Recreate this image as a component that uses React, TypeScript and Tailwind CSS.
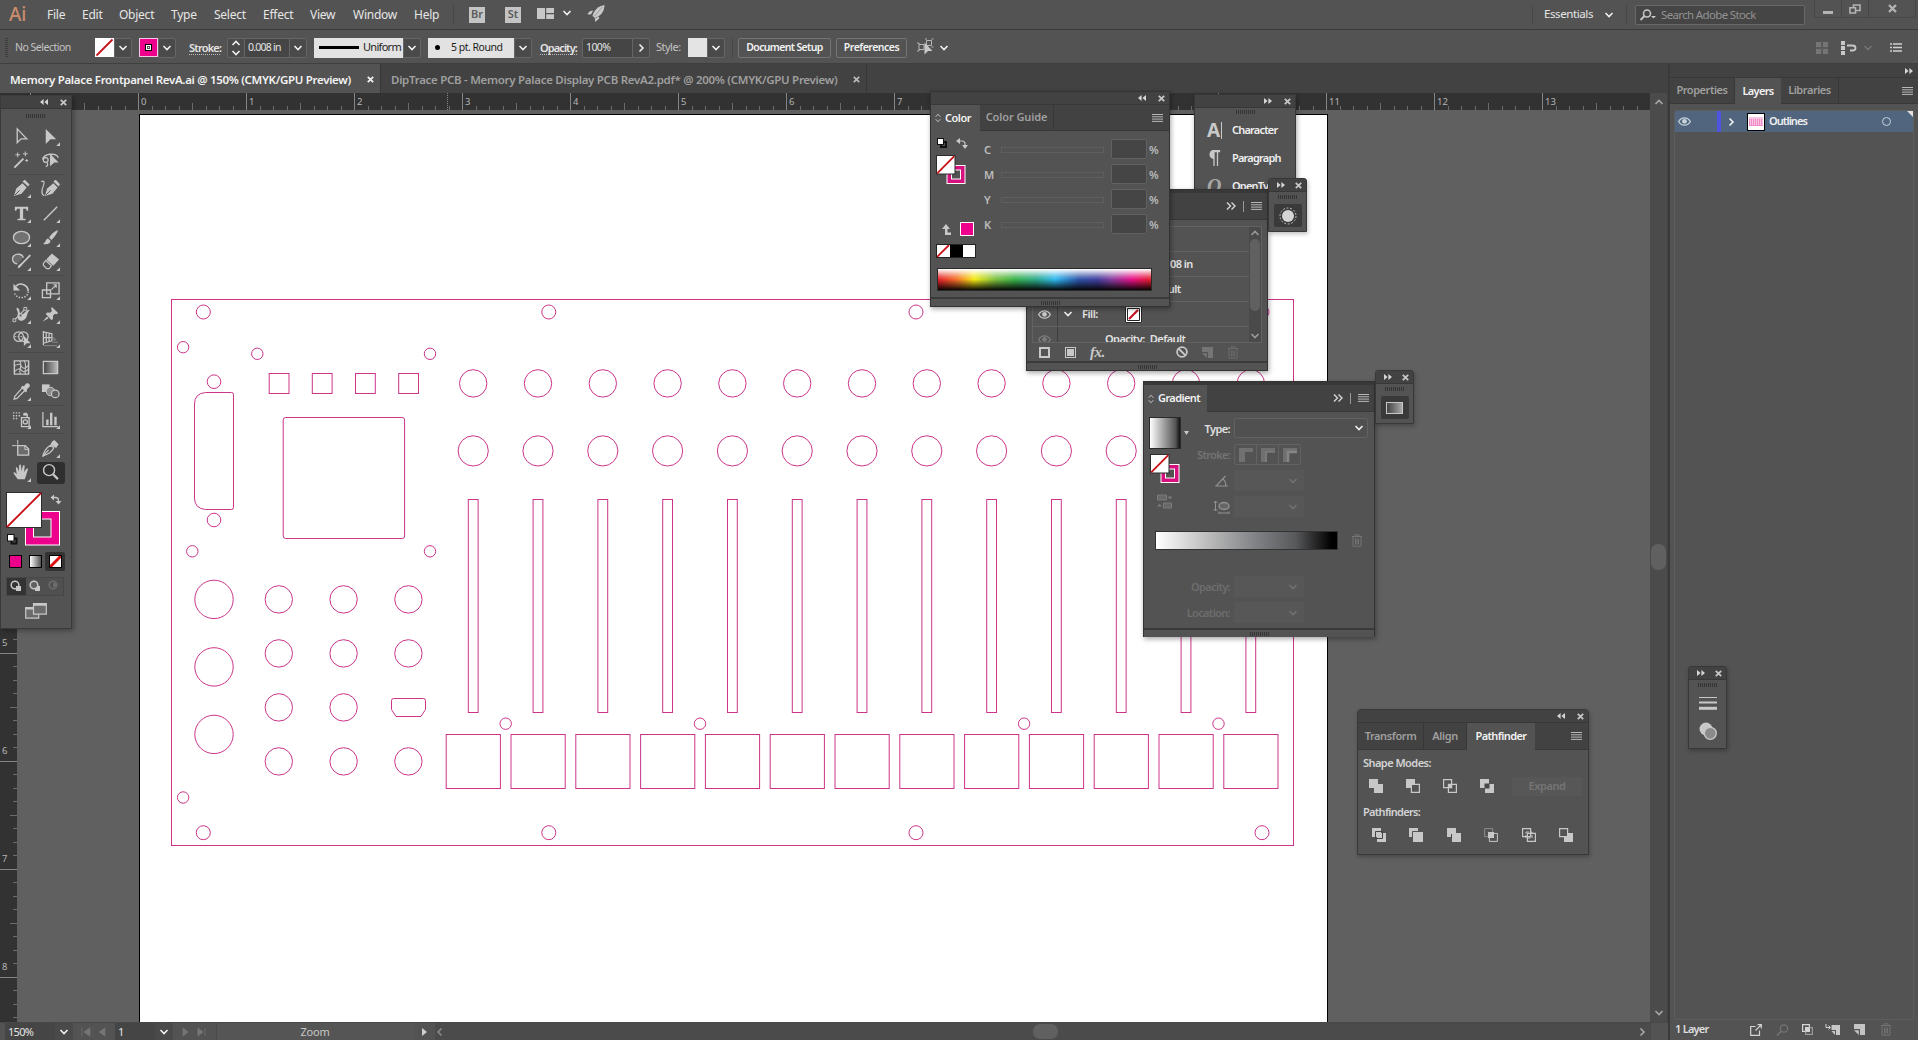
import type { ReactNode } from 'react'
import clsx from 'clsx'

const PINK = '#ec008c'

type IconProps = { className?: string; children: ReactNode; box?: string }

function Svg({ className = 'h-5 w-5', children, box = '0 0 20 20' }: IconProps) {
  return (
    <svg viewBox={box} className={clsx('shrink-0', className)} fill="none" aria-hidden>
      {children}
    </svg>
  )
}

/* ---------- small shared glyphs ---------- */

function Chevron({ dir = 'down', className = 'text-[#f0f0f0]' }: { dir?: 'down' | 'up' | 'right' | 'left'; className?: string }) {
  const d = {
    down: 'M1.5 3l3.5 3.5L8.5 3',
    up: 'M1.5 7L5 3.5 8.5 7',
    right: 'M3.5 1.5L7 5 3.5 8.5',
    left: 'M6.5 1.5L3 5l3.5 3.5',
  }[dir]
  return (
    <Svg box="0 0 10 10" className={clsx('h-2.5 w-2.5', className)}>
      <path d={d} stroke="currentColor" strokeWidth="1.6" />
    </Svg>
  )
}

function DoubleArrow({ dir = 'right' }: { dir?: 'left' | 'right' }) {
  return (
    <Svg box="0 0 8 6" className={clsx('h-1.5 w-2 text-[#d6d6d6]', dir === 'left' && 'rotate-180')}>
      <path d="M0 0l3.6 3L0 6zM4.4 0L8 3 4.4 6z" fill="currentColor" />
    </Svg>
  )
}

function Close({ className = 'h-[7px] w-[7px] text-[#c6c6c6]' }: { className?: string }) {
  return (
    <Svg box="0 0 7 7" className={className}>
      <path d="M.8.8l5.4 5.4M6.2.8L.8 6.2" stroke="currentColor" strokeWidth="1.8" />
    </Svg>
  )
}

function MenuLines() {
  return (
    <Svg box="0 0 11 8" className="h-2 w-[11px]">
      <path d="M0 .5h11M0 2.8h11M0 5.1h11M0 7.4h11" stroke="#b8b8b8" strokeWidth="1" />
    </Svg>
  )
}

function Expander() {
  return (
    <Svg box="0 0 10 8" className="h-2 w-[10px]">
      <path d="M1 .5L4.5 4 1 7.5M5.5.5L9 4 5.5 7.5" stroke="#d6d6d6" strokeWidth="1.4" />
    </Svg>
  )
}

function Grip() {
  return <div className="h-[4px] w-[19px] bg-[repeating-linear-gradient(90deg,#353535_0_1px,transparent_1px_2px)]" />
}

function UpDown() {
  return (
    <Svg box="0 0 6 10" className="h-[10px] w-[6px]">
      <path d="M.7 3.8L3 1.2l2.3 2.6M.7 6.2L3 8.8l2.3-2.6" stroke="#c0c0c0" />
    </Svg>
  )
}

function Trash({ className = 'text-[#747474]' }: { className?: string }) {
  return (
    <Svg box="0 0 12 13" className={clsx('h-[13px] w-3', className)}>
      <path d="M1 2.5h10M4 2V.8h4V2M2 2.5v9.7h8V2.5M4.4 4.5v6M6 4.5v6M7.6 4.5v6" stroke="currentColor" />
    </Svg>
  )
}

function Eye({ className }: { className?: string }) {
  return (
    <Svg box="0 0 13 9" className={clsx('h-[9px] w-[13px]', className)}>
      <path d="M.6 4.5C3.5-.4 9.5-.4 12.4 4.5 9.5 9.4 3.5 9.4.6 4.5z" stroke="currentColor" strokeWidth="1.3" />
      <circle cx="6.5" cy="4.3" r="2.4" fill="currentColor" />
    </Svg>
  )
}

/* fill square with the red "none" slash over the magenta stroke ring */
function FillStroke() {
  return (
    <Svg box="0 0 30 30" className="h-[30px] w-[30px]">
      <rect x="11" y="10.5" width="18" height="18" fill="#d6107f" stroke="#fff" />
      <rect x="15.5" y="15" width="9" height="9" fill="#535353" stroke="#fff" />
      <rect x=".5" y=".5" width="18.5" height="18.5" fill="#fff" stroke="#2c2c2c" />
      <path d="M1.2 18.3L18.3 1.2" stroke="#c81018" strokeWidth="1.8" />
    </Svg>
  )
}

function NewItem({ className = 'text-[#c4c4c4]' }: { className?: string }) {
  return (
    <Svg box="0 0 11 11" className={clsx('h-[11px] w-[11px]', className)}>
      <path d="M0 0h11v11H6V5H0z" fill="currentColor" />
      <path d="M0 6.2h4.8V11z" fill="currentColor" />
    </Svg>
  )
}

/* ---------- top bars ---------- */

function MenuBar() {
  return (
    <header className="flex h-[30px] shrink-0 items-center border-b border-[#3a3a3a] bg-[#535353] text-[12px] text-[#e6e6e6]">
      <span className="ml-[9px] w-[38px] text-[19px] leading-none font-medium tracking-[-0.3px] text-[#c98d6c]">Ai</span>
      <nav className="flex tracking-[-0.25px]">
        <span className="w-[35px]">File</span>
        <span className="w-[37px]">Edit</span>
        <span className="w-[52px]">Object</span>
        <span className="w-[43px]">Type</span>
        <span className="w-[49px]">Select</span>
        <span className="w-[47px]">Effect</span>
        <span className="w-[43px]">View</span>
        <span className="w-[61px]">Window</span>
        <span className="w-[39px]">Help</span>
      </nav>
      <span className="h-[20px] w-px bg-[#474747]" />
      <span className="ml-[15px] flex h-[16px] w-[16px] items-center justify-center bg-[#c4c4c4] text-[11px] font-semibold text-[#5a5a5a]">Br</span>
      <span className="ml-[20px] flex h-[16px] w-[16px] items-center justify-center bg-[#c4c4c4] text-[11px] font-semibold text-[#5a5a5a]">St</span>
      <Svg box="0 0 17 11" className="mb-[3px] ml-[16px] h-[11px] w-[17px]">
        <path d="M0 0h8v11H0zM9.2 0H17v5H9.2zM9.2 6.2H17V11H9.2z" fill="#c8c8c8" />
      </Svg>
      <span className="mb-[3px] ml-[8px] flex"><Chevron /></span>
      <Svg box="0 0 18 17" className="mb-[2px] ml-[15px] h-[17px] w-[18px]">
        <path d="M17.5 0c-5 .8-8.800 3.500-11 8l-1 2.800 2.300 2.200 2.800-1.200C15 9.500 17.300 5.500 17.500 0z" fill="#c8c8c8" />
        <path d="M6.300 5.500c-2.800.2-4.800 1.500-6 3.700l3.600.4zM12 11.500l.2 2-4 3.500-.4-3.500z" fill="#c8c8c8" />
        <path d="M15.500 2L7.500 11" stroke="#8a8a8a" strokeWidth=".7" />
      </Svg>

      <div className="ml-auto flex h-full items-center">
        <span className="h-[20px] w-px bg-[#474747]" />
        <span className="mb-[2px] ml-[11px] w-[60px] text-[11.5px] tracking-[-0.4px]">Essentials</span>
        <span className="flex"><Chevron /></span>
        <span className="ml-[12px] h-[20px] w-px bg-[#474747]" />
        <div className="ml-[8px] flex h-[20px] w-[170px] items-center rounded-[2px] border border-[#686868] bg-[#454545] text-[#929292]">
          <Svg box="0 0 18 12" className="ml-[3px] h-3 w-[18px]">
            <circle cx="8" cy="4.500" r="3.500" stroke="#c8c8c8" strokeWidth="1.500" />
            <path d="M5.500 7L1.500 11" stroke="#c8c8c8" strokeWidth="1.800" />
            <path d="M12 7h5l-2.500 2.500z" fill="#c8c8c8" />
          </Svg>
          <span className="ml-[4px] text-[11.5px] tracking-[-0.65px]">Search Adobe Stock</span>
        </div>
        <div className="ml-[9px] flex h-[18px] self-start rounded-b-[3px] border border-t-0 border-[#474747]">
          <span className="flex w-[27px] items-center justify-center border-r border-[#474747]">
            <span className="mt-[7px] h-[3px] w-[10px] bg-[#b4b4b4]" />
          </span>
          <span className="flex w-[27px] items-center justify-center border-r border-[#474747]">
            <Svg box="0 0 12 10" className="h-[10px] w-3">
              <path d="M4.500 1h6.500v5.500H4.500z" stroke="#b4b4b4" strokeWidth="1.600" />
              <path d="M1 3.800h5.500V9H1z" fill="#535353" stroke="#b4b4b4" strokeWidth="1.600" />
            </Svg>
          </span>
          <span className="flex w-[46px] items-center justify-center">
            <Close className="h-[9px] w-[9px] text-[#b4b4b4]" />
          </span>
        </div>
        <span className="w-[2px]" />
      </div>
    </header>
  )
}

function DropBox({ className, children }: { className?: string; children?: ReactNode }) {
  return (
    <span className={clsx('flex h-[20px] w-[18px] items-center justify-center rounded-r-[2px] border border-[#666] bg-[#4a4a4a]', className)}>
      {children ?? <Chevron />}
    </span>
  )
}

function ControlBar() {
  return (
    <div className="flex h-[34px] shrink-0 items-center border-b border-[#3f3f3f] bg-[#535353] pt-[2px] text-[11px] text-[#e4e4e4]">
      <span className="ml-[5px] h-[19px] w-[3px] bg-[repeating-linear-gradient(#3e3e3e_0_1px,transparent_1px_2px)]" />
      <span className="ml-[7px] w-[73px] text-[10.5px] tracking-[-0.5px] whitespace-nowrap text-[#c4c4c4]">No Selection</span>
      <span className="ml-[7px] flex">
        <Svg box="0 0 19 19" className="h-[19px] w-[19px] bg-white">
          <path d="M1.500 17.500L17.500 1.500" stroke="#c81018" strokeWidth="1.800" />
        </Svg>
        <DropBox />
      </span>
      <span className="ml-[7px] flex">
        <span className="flex h-[19px] w-[19px] items-center justify-center border border-[#f3c8e2] bg-[#ec008c]">
          <span className="flex h-[7px] w-[7px] border border-black bg-white p-[1px]">
            <span className="flex-1 border border-[#555]" />
          </span>
        </span>
        <DropBox />
      </span>
      <span className="ml-[13px] w-[31px] border-b border-dotted border-[#bbb] leading-[13px] font-semibold tracking-[-0.8px]">Stroke:</span>
      <span className="ml-[7px] flex">
        <span className="flex h-[20px] w-[18px] flex-col items-center justify-center rounded-l-[2px] border border-[#666] bg-[#4a4a4a]">
          <Chevron dir="up" />
          <Chevron />
        </span>
        <span className="flex h-[20px] w-[44px] items-center border-y border-[#666] bg-[#454545] pl-[3px] text-[10.5px] tracking-[-0.75px] whitespace-nowrap">0.008 in</span>
        <DropBox />
      </span>
      <span className="ml-[7px] flex">
        <span className="flex h-[20px] w-[89px] items-center bg-[#e2e2e2] pl-[5px] tracking-[-0.7px] text-[#1c1c1c]">
          <span className="mr-[4px] h-[3px] w-[40px] shrink-0 bg-black" />
          Uniform
        </span>
        <DropBox />
      </span>
      <span className="ml-[7px] flex">
        <span className="flex h-[20px] w-[86px] items-center bg-[#e2e2e2] pl-[7px] text-[10.5px] tracking-[-0.5px] whitespace-nowrap text-[#1c1c1c]">
          <span className="mr-[11px] h-[5px] w-[5px] rounded-full bg-black" />
          5 pt. Round
        </span>
        <DropBox />
      </span>
      <span className="ml-[8px] w-[37px] border-b border-dotted border-[#bbb] leading-[13px] font-semibold tracking-[-0.9px]">Opacity:</span>
      <span className="ml-[5px] flex">
        <span className="flex h-[20px] w-[50px] items-center rounded-l-[2px] border border-r-0 border-[#666] bg-[#454545] pl-[3px] text-[10.5px] tracking-[-0.6px]">100%</span>
        <DropBox><Chevron dir="right" /></DropBox>
      </span>
      <span className="ml-[6px] w-[25px] tracking-[-0.5px] text-[#c4c4c4]">Style:</span>
      <span className="ml-[7px] flex">
        <span className="h-[19px] w-[19px] bg-[#e4e4e4]" />
        <DropBox />
      </span>
      <span className="ml-[7px] h-[20px] w-px bg-[#474747]" />
      <span className="ml-[5px] flex h-[20px] w-[93px] items-center justify-center rounded-[2px] border border-[#747474] text-[10.5px] font-semibold tracking-[-0.65px] whitespace-nowrap text-[#f2f2f2]">Document Setup</span>
      <span className="ml-[5px] flex h-[20px] w-[71px] items-center justify-center rounded-[2px] border border-[#747474] text-[10.5px] font-semibold tracking-[-0.5px] text-[#f2f2f2]">Preferences</span>
      <Svg box="0 0 17 17" className="mb-[3px] ml-[10px] h-[17px] w-[17px]">
        <path d="M2 6.500h5v5H2zM0 5h2M0 13h2M9.500 2.500h5v5h-5zM8 1h2M14.500 1h2M14.500 9h2M2 5v1.500M2 11.500V13" stroke="#b6b6b6" />
        <path d="M7.500 4.500l8 8.500h-4.500l-3.500 3.500z" fill="#c8c8c8" />
      </Svg>
      <span className="ml-[5px] flex"><Chevron /></span>

      <div className="ml-auto flex items-center">
        <Svg box="0 0 12 12" className="h-3 w-3">
          <path d="M0 0h5v5H0zM7 0h5v5H7zM0 7h5v5H0zM7 7h5v5H7z" fill="#757575" />
          <path d="M6 0v12M0 6h12" stroke="#6b6b6b" strokeDasharray="1 1" />
        </Svg>
        <Svg box="0 0 16 14" className="ml-[13px] h-[14px] w-4">
          <path d="M0 0h4v4H0zM0 5h4v4H0zM0 10h4v4H0z" fill="#c8c8c8" />
          <path d="M6 4.500h5.500c4 0 4 5 0 5H9" stroke="#c8c8c8" strokeWidth="1.800" />
        </Svg>
        <span className="ml-[6px] flex"><Chevron className="text-[#747474]" /></span>
        <Svg box="0 0 12 9" className="mr-[16px] ml-[17px] h-[9px] w-3">
          <path d="M0 1h2M0 4.500h2M0 8h2M3 1h9M3 4.500h9M3 8h9" stroke="#d0d0d0" strokeWidth="1.300" />
        </Svg>
      </div>
    </div>
  )
}

function DocTabs() {
  return (
    <div className="flex h-[29px] shrink-0 bg-[#424242] text-[11.5px] font-semibold">
      <div className="flex w-[381px] items-center justify-between border-r border-[#383838] bg-[#535353] pt-[2px] pr-[6px] pl-[10px] text-[#f2f2f2]">
        <span className="tracking-[-0.31px] whitespace-nowrap">Memory Palace Frontpanel RevA.ai @ 150% (CMYK/GPU Preview)</span>
        <Close className="h-[7px] w-[7px] text-[#f0f0f0]" />
      </div>
      <div className="flex w-[486px] items-center justify-between border-r border-[#383838] pt-[2px] pr-[6px] pl-[10px] text-[#9f9f9f]">
        <span className="tracking-[-0.285px] whitespace-nowrap">DipTrace PCB - Memory Palace Display PCB RevA2.pdf* @ 200% (CMYK/GPU Preview)</span>
        <Close className="h-[7px] w-[7px] text-[#b8b8b8]" />
      </div>
    </div>
  )
}

/* ---------- rulers & artboard ---------- */

const INCH = 108
const ORIGIN_X = 138.5
const ORIGIN_Y = 113.3

const H_TICKS = Array.from({ length: 122 }, (_, i) => i - 10).filter((i) => ORIGIN_X + i * 13.5 < 1650)
const V_TICKS = Array.from({ length: 68 }, (_, i) => i)

function tickLength(i: number) {
  if (i % 8 === 0) return 17
  return i % 4 === 0 ? 7 : 4
}

function HRuler() {
  return (
    <svg viewBox="0 93 1650 17" className="block h-[17px] w-[1650px] bg-[#323232]">
      {H_TICKS.map((i) => {
        const x = Math.round(ORIGIN_X + i * 13.5 - 0.5) + 0.5
        return <path key={i} d={`M${x} 110v-${tickLength(i)}`} stroke={i % 8 === 0 ? '#858585' : '#6c6c6c'} />
      })}
      {H_TICKS.filter((i) => i >= 0 && i % 8 === 0).map((i) => (
        <text key={i} x={ORIGIN_X + i * 13.5 + 2.5} y="105" fontSize="9.5" fill="#b4b4b4">
          {i / 8}
        </text>
      ))}
      <path d="M447.5 93v17" stroke="#858585" strokeDasharray="1 1" />
    </svg>
  )
}

// The first inches lie under the toolbox, so labels start below it.
function VRuler() {
  return (
    <svg viewBox="0 110 17 912" className="block h-[912px] w-[17px] shrink-0 bg-[#323232]">
      {V_TICKS.map((i) => {
        const y = Math.round(ORIGIN_Y + i * 13.5 - 0.5) + 0.5
        return <path key={i} d={`M17 ${y}h-${tickLength(i)}`} stroke={i % 8 === 0 ? '#858585' : '#6c6c6c'} />
      })}
      {V_TICKS.filter((i) => i >= 40 && i % 8 === 0).map((i) => (
        <text key={i} x="2" y={ORIGIN_Y + (i / 8) * INCH - 7} fontSize="9.5" fill="#b4b4b4">
          {i / 8}
        </text>
      ))}
    </svg>
  )
}

// [cx, cy, r]
const HOLES: [number, number, number][] = [
  [203.3, 312, 7], [548.8, 312, 7], [916, 312, 7], [1262, 312, 7],
  [203.3, 832.7, 7], [548.8, 832.7, 7], [916, 832.7, 7], [1262, 832.7, 7],
  [183.1, 347.2, 5.7], [257.3, 353.8, 5.7], [430, 353.8, 5.7],
  [192.3, 551.3, 5.7], [430, 551.3, 5.7], [183.1, 797.5, 5.7],
  [214, 381.7, 6.8], [214, 520, 6.8],
  [505.7, 723.7, 5.7], [700, 723.7, 5.7], [1024.1, 723.7, 5.7], [1218.5, 723.7, 5.7],
  [214, 599.4, 19.2], [214, 666.9, 19.2], [214, 734.4, 19.2],
]

const COLUMNS = Array.from({ length: 13 }, (_, i) => 473.2 + i * 64.8)
const KNOB_X = [278.8, 343.6, 408.4]
const KNOB_Y = [599.4, 653.4, 707.4, 761.4]
const LED_X = [269.2, 312.3, 355.5, 398.7]

function Artboard() {
  return (
    <svg viewBox="17 110 1633 912" className="block h-[912px] w-[1633px] bg-[#606060]">
      <rect x="139.5" y="114.5" width="1188" height="1400" fill="#fff" stroke="#000" />
      <g fill="none" stroke="#cb3489">
        <rect x="171.5" y="299.5" width="1122" height="546" />
        {HOLES.map(([cx, cy, r], i) => (
          <circle key={i} cx={cx} cy={cy} r={r} />
        ))}
        {KNOB_X.flatMap((cx) =>
          KNOB_Y.filter((cy) => !(cx === 408.4 && cy === 707.4)).map((cy) => (
            <circle key={`${cx}-${cy}`} cx={cx} cy={cy} r="13.7" />
          )),
        )}
        {LED_X.map((x) => (
          <rect key={x} x={x} y="373.5" width="19.8" height="20" />
        ))}
        <rect x="283.2" y="417.5" width="121.4" height="121" rx="2.5" />
        <path d="M205.5 392.5h26q2 0 2 2v113q0 2-2 2h-26q-11-1-11-11.5v-94q0-10.5 11-11.5z" />
        <path d="M393.5 698.5h30q2 0 2 2v9l-4.5 7h-25l-4.5-7v-9q0-2 2-2z" />
        {COLUMNS.map((x) => (
          <g key={x}>
            <circle cx={x} cy="383.4" r="13.7" />
            <circle cx={x} cy="450.9" r="15.1" />
            <rect x={x - 4.9} y="499.5" width="9.8" height="213" />
            <rect x={x - 27} y="734.5" width="54.2" height="54" />
          </g>
        ))}
      </g>
    </svg>
  )
}

function StatusBar() {
  return (
    <div className="flex h-[18px] items-center border-t border-[#484848] bg-[#535353] text-[11px] text-[#e4e4e4]">
      <span className="ml-[5px] flex h-full w-[50px] items-center bg-[#454545] pt-px pl-[3px] tracking-[-0.7px]">150%</span>
      <span className="flex h-full w-[18px] items-center justify-center bg-[#4a4a4a]"><Chevron /></span>
      <Svg box="0 0 42 10" className="h-[10px] w-[42px] text-[#757575]">
        <path d="M9 1v8M17 1v8l-6-4zM32 1v8l-6-4z" fill="currentColor" stroke="currentColor" strokeWidth=".8" />
      </Svg>
      <span className="flex h-full w-[40px] items-center bg-[#454545] pt-px pl-[3px]">1</span>
      <span className="flex h-full w-[18px] items-center justify-center bg-[#4a4a4a]"><Chevron /></span>
      <Svg box="0 0 43 10" className="h-[10px] w-[43px] text-[#757575]">
        <path d="M10 1v8l5-4zM25 1v8l5-4zM32 1v8" fill="currentColor" stroke="currentColor" strokeWidth=".8" />
      </Svg>
      <span className="flex h-full w-[199px] items-center justify-center border-l border-[#4a4a4a] bg-[#555] pt-px pr-[2px] tracking-[-0.2px] text-[#c8c8c8]">Zoom</span>
      <Svg box="0 0 20 10" className="h-[10px] w-[20px]">
        <path d="M7 1v8l5-4z" fill="#d0d0d0" />
      </Svg>
      <span className="flex h-full flex-1 items-center justify-between bg-[#4b4b4b] pr-[4px]">
        <Chevron dir="left" className="text-[#8a8a8a]" />
        <span className="ml-[9px] h-[15px] w-[25px] rounded-[7px] bg-[#606060]" />
        <Chevron dir="right" className="text-[#a8a8a8]" />
      </span>
      <span className="h-full w-[17px]" />
    </div>
  )
}

/* ---------- right dock ---------- */

function LayersDock() {
  return (
    <aside className="flex w-[250px] shrink-0 flex-col border-l-2 border-[#3a3a3a] bg-[#535353] text-[11px]">
      <div className="flex h-[13px] shrink-0 items-center justify-end bg-[#424242] pr-[5px]"><DoubleArrow /></div>
      <div className="flex h-[27px] shrink-0 items-stretch border-y border-[#383838] bg-[#424242] font-semibold text-[#9f9f9f]">
        <span className="flex w-[65px] items-center justify-center border-r border-[#383838] tracking-[-0.45px]">Properties</span>
        <span className="-mb-px flex w-[46px] items-center justify-center bg-[#535353] tracking-[-0.65px] text-[#f2f2f2]">Layers</span>
        <span className="flex w-[58px] items-center justify-center border-r border-[#383838] tracking-[-0.45px]">Libraries</span>
        <span className="mr-[5px] ml-auto flex items-center"><MenuLines /></span>
      </div>
      <div className="mx-[4px] mt-[6px] flex-1 rounded-[3px] border border-[#5e5e5e]">
        <div className="flex h-[21px] items-center bg-[#51667e] font-semibold text-[#f0f0f0]">
          <span className="ml-[3px] flex w-[39px] text-[#c8d2dc]"><Eye className="h-2 w-3" /></span>
          <span className="h-full w-[4px] bg-[#4f55e0]" />
          <span className="mr-[11px] ml-[5px] flex"><Chevron dir="right" /></span>
          <Svg box="0 0 18 18" className="h-[18px] w-[18px]">
            <rect x=".5" y=".5" width="17" height="17" fill="#fff" stroke="#000" />
            <path d="M2 5h14M2 12.5h14" stroke="#f28cc8" />
            <path d="M2 9h14" stroke="#f08cc6" strokeWidth="6" strokeDasharray="1.5 .5" />
          </Svg>
          <span className="ml-[4px] tracking-[-0.9px]">Outlines</span>
          <span className="ml-auto h-[9px] w-[9px] rounded-full border border-[#c8d2dc]" />
          <Svg box="0 0 6 6" className="ml-[16px] h-1.5 w-1.5 self-start"><path d="M0 0h6v6z" fill="#e2e2e2" /></Svg>
        </div>
      </div>
      <div className="flex h-[20px] shrink-0 items-center pb-px pl-[5px] text-[#dedede]">
        <span className="w-[75px] font-semibold tracking-[-0.75px]">1 Layer</span>
        <Svg box="0 0 12 12" className="h-3 w-3">
          <path d="M5.5 2.5H.7v8.800h8.800V6.500M7.500.7h3.800v3.800M11.300.7L5.500 6.500" stroke="#d4d4d4" strokeWidth="1.200" />
        </Svg>
        <Svg box="0 0 13 12" className="ml-[14px] h-3 w-[13px]">
          <circle cx="8" cy="4.500" r="3.700" stroke="#757575" strokeWidth="1.200" />
          <path d="M5.300 7.300L1 11.500" stroke="#757575" strokeWidth="1.600" />
        </Svg>
        <Svg box="0 0 11 11" className="ml-[13px] h-[11px] w-[11px]">
          <path d="M.6.6h6.800v6.800H.6z" stroke="#d4d4d4" strokeWidth="1.200" />
          <path d="M3.600 3.600h6.800v6.800H3.600z" stroke="#9a9a9a" strokeWidth="1.200" />
          <path d="M3 3h4.500v4.500H3z" fill="#d4d4d4" />
        </Svg>
        <Svg box="0 0 15 11" className="ml-[12px] h-[11px] w-[15px]">
          <path d="M1 0v3.500h4M3.500 1.500l2 2-2 2" stroke="#d4d4d4" />
          <path d="M6.500 1H15v10h-4V6H6.500zM6.500 7H10v4z" fill="#c8c8c8" />
        </Svg>
        <span className="ml-[14px] flex"><NewItem /></span>
        <span className="ml-[15px] flex"><Trash /></span>
      </div>
    </aside>
  )
}

/* ---------- floating panels ---------- */

function PanelHeader({ dir, className, gap = 'gap-[12px]' }: { dir: 'left' | 'right'; className?: string; gap?: string }) {
  return (
    <div className={clsx('flex h-[13px] shrink-0 items-center justify-end border-b border-[#383838] bg-[#424242] pr-[4px]', gap, className)}>
      <DoubleArrow dir={dir} />
      <Close />
    </div>
  )
}

function PanelFoot() {
  return (
    <div className="flex h-[9px] shrink-0 items-center justify-center border-t-2 border-[#3a3a3a] bg-[#535353]">
      <Grip />
    </div>
  )
}

const G = '#c8c8c8'

const arrowPath = 'M5 2l11 11h-6l-5 5z'
const nib = 'M2 18l2.5-8L11 4.5l4.5 4.5L10 15.5z'

function Corner() {
  return <path d="M20 16v4h-4z" fill={G} />
}

const TOOL_GROUPS: ReactNode[][] = [
  [
    <path d="M5.5 2l10 10.5h-6l-4 4z" stroke={G} strokeWidth="1.4" />,
    <><path d={arrowPath} fill={G} /><Corner /></>,
    <>
      <path d="M2.5 17.5L12 8" stroke={G} strokeWidth="2" />
      <path d="M6 1.5v5M3.5 4h5M14 .5v5M11.5 3h5M15.5 8.5v3M14 10h3" stroke={G} />
    </>,
    <>
      <path d="M2 9c-1-6 15-8 16-2" stroke={G} strokeWidth="1.6" />
      <circle cx="5" cy="9.5" r="2.5" stroke={G} strokeWidth="1.3" />
      <path d="M6 12c2 1.5 1 4-1 4.5" stroke={G} strokeWidth="1.3" />
      <path d="M9.5 3l9 9h-4.5l-4.5 4z" fill={G} />
    </>,
  ],
  [
    <><path d={nib} fill={G} /><path d="M3 17l5-5" stroke="#535353" /><path d="M11 2.5L13.5.8l5 5L17 8z" fill={G} /><Corner /></>,
    <>
      <path d={nib} fill={G} transform="translate(2)" />
      <path d="M5 17l5-5" stroke="#535353" />
      <path d="M13 2.5L15.5.8l4.5 4.8L18.5 8z" fill={G} />
      <path d="M0 3c3-2 4 0 2.5 4s-3 9 1 10.5" stroke={G} strokeWidth="1.2" />
    </>,
    <><path d="M3 3h14v4h-1.5l-.8-2h-3v10.5h2.5V17H5.8v-1.5h2.5V5h-3l-.8 2H3z" fill={G} /><Corner /></>,
    <><path d="M3 17L17 3" stroke={G} strokeWidth="1.5" /><Corner /></>,
    <><ellipse cx="10" cy="10" rx="8.5" ry="6.5" fill="#727272" stroke={G} strokeWidth="1.4" /><Corner /></>,
    <><path d="M18 2c-4 1.5-7.5 4.5-9.5 8l2.5 2.5c3-3 6-6.5 7-10.5zM7.5 11c-3 0-2 4.5-5.5 5.5 4 1.5 8 0 8-3z" fill={G} /><Corner /></>,
    <>
      <path d="M12 6c-1-4-7-5-10-2s-1 8 3.5 8.5" fill="#6c6c6c" stroke={G} strokeWidth="1.4" />
      <path d="M20 4l-8 8-4 4.5-2 .5.5-2.5 4.5-4L18.5 2.5z" fill={G} />
      <Corner />
    </>,
    <>
      <path d="M11.5 1.5L19 8l-6 6.5L5.5 8z" fill={G} />
      <path d="M5 9l6 5.5-2.5 3H6L2.5 14v-2z" stroke={G} strokeWidth="1.3" />
      <Corner />
    </>,
  ],
  [
    <>
      <path d="M4 5.5c5-5 13-1 13 5" stroke={G} strokeWidth="1.7" />
      <path d="M1.5 3v7h7z" fill={G} />
      <path d="M17 11c0 8-13 9-14.5 1" stroke={G} strokeWidth="1.5" strokeDasharray="1.5 1.5" />
      <Corner />
    </>,
    <>
      <path d="M6 2h13v11.5H6zM1.5 9.5H10v8H1.5z" stroke={G} strokeWidth="1.4" />
      <path d="M11 9l5-5M13 4h3v3" stroke={G} strokeWidth="1.2" />
      <Corner />
    </>,
    <>
      <path d="M5 3c4 0 2 7 5 7s4-5 9-5c-4 3-2 9-7 11s-7-2-6-6-2-4-1-7z" fill={G} />
      <path d="M2.5 16L14 4" stroke={G} strokeWidth="1.2" />
      <path d="M1 14.5h3v3H1zM12.5 2.5h3v3h-3zM7.5 9.5h3v3h-3z" fill="#535353" stroke={G} />
      <Corner />
    </>,
    <><path d="M11.5 2l6.5 6.5-1.5 1.2-2-.4-2 2.2.2 3-1.5 1.5L5 9.5 6.5 8l3 .2 2-2-.8-2.5zM6.5 12L1.5 17.5 8 14z" fill={G} /><Corner /></>,
    <>
      <circle cx="7" cy="8" r="5" stroke={G} strokeWidth="1.3" />
      <circle cx="12" cy="8" r="5" stroke={G} strokeWidth="1.3" />
      <path d="M3 8h9" stroke={G} strokeDasharray="1.5 1.5" />
      <path d="M12.5 7l7 8h-4l-3 3z" fill={G} />
      <Corner />
    </>,
    <>
      <path d="M2.5 2v15M2.5 3l9 2v7.5l-9 2.5M2.5 9h9M5.5 4v10M8.5 4.5v9" stroke={G} strokeWidth="1.3" />
      <path d="M12 9l3 1M3 17.5h14M12 14h6M12 11.5h4" stroke="#8c8c8c" />
      <Corner />
    </>,
  ],
  [
    <>
      <path d="M2.5 3h15v14h-15z" stroke={G} strokeWidth="1.5" />
      <path d="M3 8c5-3 6-1 7 1s4 3 7-1M3 14c4-4 6-3 7-1s4 2 7-1M8 3c4 4-2 10 1 14M13 3c3 5 0 8 1 14" stroke={G} strokeWidth="1.1" />
    </>,
    <>
      <defs>
        <linearGradient id="toolGrad"><stop stopColor="#444" /><stop offset="1" stopColor="#bbb" /></linearGradient>
      </defs>
      <path d="M2.5 3.5h15v13h-15z" fill="url(#toolGrad)" stroke={G} strokeWidth="1.4" />
    </>,
    <>
      <path d="M11 6l-8 9-.8 3 3-.8 8.5-8.5" stroke={G} strokeWidth="1.3" />
      <path d="M9.5 5.5l1.5-1.5 1.5.5L15 1.5c2.500-1 4.500 1 3.500 3.500L15.500 8l.3 1.500L14.500 11z" fill={G} />
      <Corner />
    </>,
    <>
      <path d="M1 2.5h8v8H1z" fill={G} />
      <circle cx="10" cy="10" r="4.5" fill="#8a8a8a" stroke={G} />
      <circle cx="15" cy="12.5" r="4" fill="#606060" stroke={G} strokeWidth="1.3" />
    </>,
  ],
  [
    <>
      <path d="M10 8h8v9.5h-8zM12 5h4v3" stroke={G} strokeWidth="1.4" />
      <circle cx="14" cy="12.5" r="2.2" stroke={G} strokeWidth="1.3" />
      <path d="M1 3h1.5M4 3h1.5M7 3h1.5M1 6h1.5M4 6h1.5M7 6h1.5M1 9h1.5M4 9h1.5" stroke={G} strokeWidth="1.5" />
      <path d="M12 3h4v2.5h-4z" fill={G} />
      <Corner />
    </>,
    <><path d="M2 2v15.5h16" stroke={G} strokeWidth="1.3" /><path d="M5.5 10h2.5v6H5.5zM9.5 3H12v13H9.5zM14 7h2.5v9H14z" fill={G} /><Corner /></>,
  ],
  [
    <>
      <path d="M6 7h8l3.5 3.5V17H6z" fill="#6c6c6c" stroke={G} strokeWidth="1.4" />
      <path d="M0 7h5M6 1v5" stroke={G} />
      <path d="M13.5 7v4h4" stroke={G} />
    </>,
    <>
      <path d="M2 18c1-5 3-8.5 8-11.5l3.5 2.8C11 14.5 7 16 2 18z" stroke={G} strokeWidth="1.3" />
      <path d="M3 17l5-5.5" stroke={G} strokeWidth="1.3" />
      <path d="M11.5 3l2.5-2L18.5 5.5 16 9.5 10 6z" fill={G} />
      <Corner />
    </>,
    <>
      <path d="M6 17c-2-3-4-5-4.5-7 1-1 2 0 3.5 2L4 5c1-1.3 1.8 0 2.2 1l1 3L7.5 2.5c.5-1.2 1.8-1 2 0L10 8.5l1.5-5.5c.8-1 2-.5 1.8.8L12.8 9.5l2.4-3.5c1-.8 2 .2 1.5 1.2C15.5 11 14.5 14 13.5 17z" fill={G} />
      <Corner />
    </>,
    <><circle cx="8.5" cy="7.5" r="5.8" stroke={G} strokeWidth="1.5" /><path d="M12.8 12l5 5" stroke={G} strokeWidth="2.4" /></>,
  ],
]

function Toolbox() {
  return (
    <div className="absolute top-[95px] left-0 flex h-[534px] w-[72px] flex-col border border-[#3a3a3a] bg-[#535353] shadow-[2px_2px_5px_rgba(0,0,0,0.3)]">
      <PanelHeader dir="left" />
      <div className="ml-[25px] flex h-[13px] shrink-0 items-center"><Grip /></div>
      {TOOL_GROUPS.map((group, g) => (
        <div key={g} className={clsx('mx-[6px] grid shrink-0 grid-cols-2 pt-[2px] pb-px', g > 0 && 'border-t border-[#494949]')}>
          {group.map((icon, i) => {
            const active = g === 5 && i === 3
            return (
              <span key={i} className="flex h-[24.35px] items-center justify-center">
                <span className={clsx('flex h-[22px] w-[28px] items-center justify-center rounded-[3px]', active && 'bg-[#2f2f2f]')}>
                  <Svg className="h-[19px] w-[19px]">{icon}</Svg>
                </span>
              </span>
            )
          })}
        </div>
      ))}
      <Svg box="6 486 60 62" className="ml-[5px] h-[62px] w-[60px]">
        <rect x="25.5" y="511.5" width="34" height="33.5" fill={PINK} stroke="#fff" />
        <rect x="33.5" y="519" width="17.5" height="18" fill="#535353" stroke="#fff" />
        <rect x="6.5" y="492.5" width="35" height="35" fill="#fff" stroke="#2c2c2c" />
        <path d="M7 527L41 493" stroke="#c81018" strokeWidth="1.8" />
        <path d="M52.5 497.5h3q3 0 3 3v2" stroke={G} strokeWidth="1.3" />
        <path d="M54 494.5v6l-3.5-3zM55.5 501h6l-3 3.5z" fill={G} />
        <rect x="11.5" y="538.5" width="5" height="5" stroke="#111" strokeWidth="2" />
        <rect x="7.5" y="534.5" width="6.5" height="6.5" fill="#fff" stroke="#111" />
      </Svg>
      <div className="mt-[4px] ml-[4px] flex h-[20px] shrink-0 items-center">
        <span className="flex w-[20px] justify-center"><span className="h-[13px] w-[13px] border border-black bg-[#ec008c]" /></span>
        <span className="flex w-[20px] justify-center"><span className="h-[13px] w-[13px] border border-black bg-linear-to-r from-white to-[#555]" /></span>
        <span className="flex h-[19px] w-[20px] items-center justify-center rounded-[2px] bg-[#333]">
          <Svg box="0 0 13 13" className="h-[13px] w-[13px] border border-black bg-white">
            <path d="M0 13L13 0" stroke="#e01010" strokeWidth="3.5" />
          </Svg>
        </span>
      </div>
      <div className="mt-[5px] ml-[5px] flex h-[19px] w-[58px] shrink-0 border border-[#474747] bg-[#505050]">
        {[0, 1, 2].map((mode) => (
          <span key={mode} className={clsx('flex flex-1 items-center justify-center', mode === 0 && 'bg-[#333]')}>
            <Svg box="0 0 12 12" className={clsx('h-3 w-3', mode === 2 ? 'text-[#6c6c6c]' : 'text-[#c8c8c8]')}>
              {mode === 1 && <path d="M6 6h5v5H6z" fill="currentColor" />}
              <circle cx="5" cy="5" r="3.8" stroke="currentColor" strokeWidth="1.5" fill={mode === 1 ? '#606060' : 'none'} />
              {mode !== 1 && <path d={mode === 0 ? 'M6 6h5v5H6z' : 'M5 3h3v4H5z'} fill="currentColor" />}
            </Svg>
          </span>
        ))}
      </div>
      <Svg box="0 0 22 16" className="mt-[7px] ml-[24px] h-4 w-[22px]">
        <path d="M.7 4.7h13v10.5H.7z" fill="#6c6c6c" stroke={G} strokeWidth="1.2" />
        <path d="M8.5.7h12.8v10.5H8.5z" fill="#6c6c6c" stroke={G} strokeWidth="1.2" />
        <path d="M1 5.5h7.5M8.5 1.8h12.8" stroke={G} strokeWidth="2" />
      </Svg>
    </div>
  )
}

function ColorPanel() {
  return (
    <div className="absolute top-[91px] left-[930px] flex h-[216px] w-[240px] flex-col border border-[#333] bg-[#535353] text-[11px] shadow-[1px_2px_5px_rgba(0,0,0,0.35)]">
      <PanelHeader dir="left" />
      <div className="flex h-[26px] shrink-0 items-stretch border-b border-[#383838] bg-[#424242] text-[11px] font-semibold">
        <span className="-mb-px flex w-[49px] items-center gap-[4px] bg-[#535353] pl-[4px] tracking-[-0.5px] text-[#f2f2f2]">
          <UpDown />Color
        </span>
        <span className="flex w-[74px] items-center justify-center border-r border-[#383838] tracking-[-0.1px] text-[#9f9f9f]">Color Guide</span>
        <span className="mr-[6px] ml-auto flex items-center"><MenuLines /></span>
      </div>
      <div className="flex flex-1">
        <div className="flex w-[50px] flex-col pl-[5px]">
          <Svg box="0 0 34 12" className="mt-[6px] h-3 w-[34px]">
            <rect x="5" y="5" width="5" height="5" stroke="#111" strokeWidth="2" />
            <rect x="1.5" y="1.5" width="6" height="6" fill="#fff" stroke="#111" />
            <path d="M23 4h3q3 0 3 3v2" stroke={G} strokeWidth="1.2" />
            <path d="M24 1v6l-4-3zM26 8h6l-3 4z" fill={G} />
          </Svg>
          <span className="mt-[6px] flex"><FillStroke /></span>
          <div className="mt-[37px] flex items-center gap-[8px] pl-[6px]">
            <Svg box="0 0 10 11" className="h-[11px] w-[10px]">
              <path d="M0 5l4-5 4 5H5.5v3.5H9V11H3V5z" fill={G} />
            </Svg>
            <span className="h-[14px] w-[14px] border border-white bg-[#ec008c]" />
          </div>
          <div className="mt-[8px] flex h-[14px] w-[40px] border border-[#222]">
            <Svg box="0 0 13 12" className="h-3 w-[13px] bg-white"><path d="M0 12L12 0" stroke="#c81018" strokeWidth="1.8" /></Svg>
            <span className="w-[13px] bg-black" />
            <span className="flex-1 bg-white" />
          </div>
        </div>
        <div className="flex flex-1 flex-col pt-[8px] font-semibold text-[#bcbcbc]">
          {['C', 'M', 'Y', 'K'].map((ch) => (
            <div key={ch} className="flex h-[25px] items-start">
              <span className="w-[20px] pl-[3px] leading-[22px]">{ch}</span>
              <span className="mt-[8px] h-[6px] w-[103px] border border-[#5f5f5f]" />
              <span className="ml-[7px] h-[20px] w-[36px] rounded-[2px] border border-[#616161] bg-[#454545]" />
              <span className="ml-[2px] leading-[22px]">%</span>
            </div>
          ))}
        </div>
      </div>
      <div className="mb-[6px] ml-[6px] flex h-[23px] w-[215px] shrink-0 border border-[#2a2a2a] bg-[linear-gradient(90deg,#e3202c,#f3742a_9%,#f5ea14_17%,#7cc043_27%,#3bb14a_36%,#2fa98a_46%,#2fb8ee_55%,#2f55a8_66%,#4440a0_75%,#8a3f9e_82%,#e8128a_91%,#e4202c)]">
        <span className="flex-1 bg-[linear-gradient(180deg,#fff,rgba(255,255,255,0.25)_35%,rgba(0,0,0,0)_50%,rgba(0,0,0,0.95))]" />
      </div>
      <PanelFoot />
    </div>
  )
}

function CharacterPanel() {
  return (
    <div className="absolute top-[94px] left-[1194px] flex h-[110px] w-[102px] flex-col border border-[#383838] bg-[#535353] text-[11px] font-semibold tracking-[-0.8px] text-[#f0f0f0] shadow-[1px_2px_5px_rgba(0,0,0,0.35)]">
      <PanelHeader dir="right" />
      <div className="flex h-[8px] shrink-0 items-center justify-center"><Grip /></div>
      <div className="flex h-[28px] shrink-0 items-center pl-[12px]">
        <span className="w-[14px] text-[19px] leading-none font-bold text-[#c8c8c8]">A</span>
        <span className="mr-[10px] h-[17px] w-px bg-[#c8c8c8]" />
        Character
      </div>
      <div className="flex h-[28px] shrink-0 items-center pl-[12px]">
        <Svg box="0 0 14 16" className="mr-[11px] h-4 w-[14px]">
          <path d="M5.5 0h7v1.5h-7zM7 1v15M10.5 1v15" stroke={G} strokeWidth="1.3" fill={G} />
          <path d="M7 0a4.5 4.5 0 000 9z" fill={G} />
        </Svg>
        Paragraph
      </div>
      <div className="flex h-[28px] shrink-0 items-center pl-[12px]">
        <span className="w-[25px] font-['Liberation_Serif',serif] text-[20px] leading-none font-bold text-[#a8a8a8] italic">O</span>
        OpenType
      </div>
    </div>
  )
}

function AppearanceRow({ children, label }: { children?: ReactNode; label?: boolean }) {
  return (
    <div className="flex h-[25px] shrink-0 items-center border-b border-[#626262]">
      <span className={clsx('flex h-full w-[25px] items-center justify-center border-r border-[#3e3e3e] pr-[2px]', label ? 'text-[#7a7a7a]' : 'text-[#c8c8c8]')}>
        <Eye />
      </span>
      {children}
    </div>
  )
}

function AppearancePanel() {
  return (
    <div className="absolute top-[189px] left-[1026px] flex h-[182px] w-[242px] flex-col border border-[#333] bg-[#535353] text-[11px] font-semibold tracking-[-0.55px] text-[#e2e2e2] shadow-[1px_2px_5px_rgba(0,0,0,0.35)]">
      <div className="flex h-[30px] shrink-0 items-center justify-end gap-[7px] border-t-[3px] border-b border-[#383838] bg-[#424242] pr-[5px]">
        <Expander />
        <span className="h-[11px] w-px bg-[#999]" />
        <MenuLines />
      </div>
      <div className="mx-[5px] mt-[6px] flex h-[117px] shrink-0 overflow-hidden border border-[#626262]">
        <div className="flex w-[216px] flex-col">
          <AppearanceRow />
          <AppearanceRow><span className="ml-[98px]">0.008 in</span></AppearanceRow>
          <AppearanceRow><span className="ml-[87px]">Default</span></AppearanceRow>
          <AppearanceRow>
            <span className="ml-[5px] flex"><Chevron /></span>
            <span className="ml-[9px] w-[43px] tracking-[-0.5px]">Fill:</span>
            <Svg box="0 0 17 17" className="h-[17px] w-[17px] bg-white">
              <path d="M.5.5h16v16H.5zM2.5 2.5h12v12h-12z" stroke="#222" />
              <path d="M4 13l9-9" stroke="#c01020" strokeWidth="2.2" />
            </Svg>
          </AppearanceRow>
          <AppearanceRow label><span className="ml-[47px]">Opacity:</span><span className="ml-[5px]">Default</span></AppearanceRow>
        </div>
        <div className="flex flex-1 flex-col items-center bg-[#4a4a4a] py-[1px]">
          <Chevron dir="up" className="text-[#9a9a9a]" />
          <span className="mt-[1px] h-[72px] w-[10px] rounded-[5px] bg-[#606060]" />
          <span className="mt-auto flex"><Chevron className="text-[#9a9a9a]" /></span>
        </div>
      </div>
      <div className="flex flex-1 items-center pl-[12px]">
        <span className="h-[11px] w-[11px] border-2 border-[#c8c8c8]" />
        <span className="ml-[15px] flex h-[11px] w-[11px] border border-[#c8c8c8] p-px"><span className="flex-1 bg-[#c8c8c8]" /></span>
        <span className="ml-[14px] w-[86px] font-['Liberation_Serif',serif] text-[15px] leading-none font-bold text-[#c8c8c8] italic">fx.</span>
        <Svg box="0 0 12 12" className="h-3 w-3">
          <circle cx="6" cy="6" r="4.9" stroke={G} strokeWidth="1.8" />
          <path d="M2.5 2.5l7 7" stroke={G} strokeWidth="1.8" />
        </Svg>
        <span className="ml-[14px] flex"><NewItem className="text-[#757575]" /></span>
        <span className="ml-[14px] flex"><Trash className="text-[#6c6c6c]" /></span>
      </div>
      <PanelFoot />
    </div>
  )
}

function MiniDock({ className, children }: { className: string; children: ReactNode }) {
  return (
    <div className={clsx('absolute flex w-[39px] flex-col items-center rounded-t-[3px] border border-[#383838] bg-[#535353] shadow-[1px_2px_4px_rgba(0,0,0,0.25)]', className)}>
      <PanelHeader dir="right" className="w-full rounded-t-[3px]" gap="gap-[10px]" />
      <div className="flex h-[10px] items-center"><Grip /></div>
      {children}
    </div>
  )
}

function GhostSelect() {
  return (
    <span className="flex h-[21px] w-[70px] items-center justify-end bg-[#575757] pr-[6px]">
      <Chevron className="text-[#717171]" />
    </span>
  )
}

function GradientPanel() {
  return (
    <div className="absolute top-[381px] left-[1143px] flex h-[256px] w-[232px] flex-col border border-[#333] bg-[#535353] text-[11px] font-semibold shadow-[1px_2px_5px_rgba(0,0,0,0.35)]">
      <div className="flex h-[30px] shrink-0 items-stretch border-t-[3px] border-b border-[#383838] bg-[#424242]">
        <span className="-mb-px flex w-[63px] items-center gap-[4px] bg-[#535353] pl-[4px] tracking-[-0.6px] text-[#f2f2f2]">
          <UpDown />Gradient
        </span>
        <div className="mr-[5px] ml-auto flex items-center gap-[7px]">
          <Expander />
          <span className="h-[11px] w-px bg-[#999]" />
          <MenuLines />
        </div>
      </div>
      <div className="flex h-[118px] shrink-0">
        <div className="flex w-[46px] flex-col pt-[5px] pl-[5px]">
          <div className="flex items-center gap-[3px]">
            <span className="h-[32px] w-[32px] shrink-0 border border-[#2a2a2a] bg-[linear-gradient(90deg,#fff,#999_50%,#555_85%,#111)]" />
            <Svg box="0 0 5 4" className="h-1 w-[5px]"><path d="M0 0h5L2.5 4z" fill={G} /></Svg>
          </div>
          <span className="mt-[5px] ml-px flex"><FillStroke /></span>
          <Svg box="0 0 16 15" className="mt-[10px] ml-[8px] h-[15px] w-4">
            <path d="M.5 1h9v5h-9zM6.5 9h8v5h-8z" fill="#686868" stroke="#7a7a7a" />
            <path d="M10.5 2.5h5l-2.5 3zM0 12.5h5l-2.5-3z" fill="#7a7a7a" />
          </Svg>
        </div>
        <div className="flex flex-1 flex-col pt-[6px]">
          <div className="flex h-[26px] items-start">
            <span className="w-[40px] text-right leading-[21px] tracking-[-0.6px] text-[#e0e0e0]">Type:</span>
            <span className="ml-[4px] flex h-[20px] w-[134px] items-center justify-end rounded-[2px] border border-[#626262] bg-[#505050] pr-[3px]"><Chevron /></span>
          </div>
          <div className="flex h-[26px] items-start">
            <span className="w-[40px] text-right leading-[22px] tracking-[-0.7px] text-[#747474]">Stroke:</span>
            <span className="ml-[4px] flex h-[21px] w-[67px] divide-x divide-[#626262] rounded-[2px] border border-[#626262]">
              {[0, 1, 2].map((i) => (
                <span key={i} className="flex flex-1 items-center justify-center">
                  <Svg box="0 0 14 14" className="h-[14px] w-[14px]">
                    <path d="M0 0h14v4H6v10H0z" fill="#707070" />
                    {i > 0 && <path d="M5 14V4h9" stroke="#868686" strokeWidth={i === 2 ? 2.5 : 1} />}
                  </Svg>
                </span>
              ))}
            </span>
          </div>
          <div className="flex h-[26px] items-start">
            <span className="flex h-[21px] w-[39px] items-center justify-end">
              <Svg box="0 0 14 12" className="h-3 w-[14px]"><path d="M13 11H1L10.5 1M8 4c2 1.5 3 4 2.5 7" stroke="#929292" strokeWidth="1.2" /></Svg>
            </span>
            <span className="ml-[5px] flex"><GhostSelect /></span>
          </div>
          <div className="flex h-[26px] items-start">
            <span className="flex h-[21px] w-[40px] items-center justify-end">
              <Svg box="0 0 17 14" className="h-[14px] w-[17px]">
                <ellipse cx="11" cy="6" rx="5" ry="3.5" fill="#666" stroke="#929292" strokeWidth="1.4" />
                <path d="M2.5 1v10M.5 3l2-2 2 2M.5 9l2 2 2-2M6 13h10M6 11.5V14M16 11.5V14" stroke="#929292" />
              </Svg>
            </span>
            <span className="ml-[4px] flex"><GhostSelect /></span>
          </div>
        </div>
      </div>
      <div className="mr-[11px] ml-[11px] flex h-[20px] shrink-0 items-center">
        <span className="h-[19px] w-[184px] border border-[#333] bg-[linear-gradient(90deg,#fff,#bdbdbd_28%,#808285_55%,#58595b_77%,#000_97%)]" />
        <span className="ml-[13px] flex"><Trash className="text-[#757575]" /></span>
      </div>
      <div className="mt-[26px] flex flex-1 flex-col tracking-[-0.65px] text-[#6e6e6e]">
        {['Opacity:', 'Location:'].map((label) => (
          <div key={label} className="flex h-[26px] items-start">
            <span className="mr-[4px] w-[86px] text-right leading-[21px]">{label}</span>
            <GhostSelect />
          </div>
        ))}
      </div>
      <PanelFoot />
    </div>
  )
}

const A = 'M0 0h9v9H0z'
const B = 'M5 5h9v9H5z'
const HOLLOW_A = 'M.6.6h8v8h-8z'
const HOLLOW_B = 'M5.4 5.4h8v8h-8z'

const SHAPE_MODES: ReactNode[] = [
  <path d={`${A}${B}`} fill={G} />,
  <><path d={A} fill={G} /><path d={HOLLOW_B} fill="#535353" stroke={G} strokeWidth="1.2" /></>,
  <><path d={`${HOLLOW_A}${HOLLOW_B}`} stroke={G} strokeWidth="1.2" /><path d="M5 5h4v4H5z" fill={G} /></>,
  <><path d={`${A}${B}`} fill={G} /><path d="M4.5 4.5h5v5h-5z" fill="#484848" /></>,
]

const PATHFINDERS: ReactNode[] = [
  <><path d={`${A}${B}`} fill={G} /><path d="M3.5 3.5h7v7h-7z" stroke="#444" /></>,
  <><path d={`${A}${B}`} fill={G} /><path d="M3.5 10V3.5H10" stroke="#535353" /><path d="M4 4h10v10H4z" fill={G} /></>,
  <><path d={`${A}${B}`} fill={G} /><path d="M4.5 6v4" stroke="#444" /></>,
  <><path d={HOLLOW_A} stroke="#8a8a8a" /><path d={HOLLOW_B} stroke={G} /><path d="M4 4h6v6H4z" fill={G} /></>,
  <><path d={`${HOLLOW_A}${HOLLOW_B}`} stroke={G} strokeWidth="1.2" /><path d="M4 4h6v6H4z" stroke={G} strokeDasharray="3 1.5" /></>,
  <><path d={B} fill={G} /><path d={HOLLOW_A} fill="#535353" stroke={G} strokeWidth="1.2" /></>,
]

function PathfinderPanel() {
  return (
    <div className="absolute top-[709px] left-[1357px] flex h-[146px] w-[232px] flex-col rounded-t-[4px] border border-[#383838] bg-[#535353] text-[11px] shadow-[1px_2px_4px_rgba(0,0,0,0.25)]">
      <PanelHeader dir="left" className="rounded-t-[4px]" />
      <div className="flex h-[27px] shrink-0 items-stretch border-b border-[#383838] bg-[#424242] font-semibold text-[#9f9f9f]">
        <span className="flex w-[66px] items-center justify-center border-r border-[#383838] tracking-[-0.4px]">Transform</span>
        <span className="flex w-[43px] items-center justify-center border-r border-[#383838] tracking-[-0.4px]">Align</span>
        <span className="-mb-px flex w-[68px] items-center justify-center bg-[#535353] tracking-[-0.6px] text-[#f2f2f2]">Pathfinder</span>
        <span className="mr-[6px] ml-auto flex items-center"><MenuLines /></span>
      </div>
      <div className="mt-[5px] ml-[5px] h-[16px] leading-[16px] font-semibold tracking-[-0.55px] text-[#d4d4d4]">Shape Modes:</div>
      <div className="mt-[5px] flex h-[20px] items-center pl-[11px]">
        {SHAPE_MODES.map((icon, i) => (
          <Svg key={i} box="0 0 14 14" className="mr-[23px] h-[14px] w-[14px]">{icon}</Svg>
        ))}
        <span className="-ml-[5px] flex h-[19px] w-[70px] items-center justify-center bg-[#575757] font-semibold tracking-[-0.4px] text-[#757575]">Expand</span>
      </div>
      <div className="mt-[8px] ml-[5px] h-[16px] leading-[16px] font-semibold tracking-[-0.7px] text-[#d4d4d4]">Pathfinders:</div>
      <div className="mt-[7px] flex h-[16px] items-center gap-[23.4px] pl-[14px]">
        {PATHFINDERS.map((icon, i) => (
          <Svg key={i} box="0 0 14 14" className="h-[14px] w-[14px]">{icon}</Svg>
        ))}
      </div>
    </div>
  )
}

export default function App() {
  return (
    <div className="relative flex h-[1040px] w-[1918px] flex-col overflow-hidden bg-[#535353] font-['Noto_Sans','Open_Sans',sans-serif] select-none">
      <MenuBar />
      <ControlBar />
      <div className="flex flex-1">
        <main className="flex w-[1668px] shrink-0 flex-col bg-[#424242]">
          <DocTabs />
          <div className="flex">
            <div className="flex flex-col">
              <HRuler />
              <div className="flex">
                <VRuler />
                <Artboard />
              </div>
            </div>
            <div className="flex w-[17px] flex-col items-center bg-[#4b4b4b] py-[4px]">
              <Chevron dir="up" className="text-[#a8a8a8]" />
              <span className="mt-[437px] h-[26px] w-[15px] rounded-[7px] bg-[#606060]" />
              <span className="mt-auto flex"><Chevron className="text-[#a8a8a8]" /></span>
            </div>
          </div>
          <StatusBar />
        </main>
        <LayersDock />
      </div>

      <Toolbox />
      <CharacterPanel />
      <AppearancePanel />
      <MiniDock className="top-[178px] left-[1268px] h-[54px]">
        <span className="mt-[2px] ml-px flex h-[23px] w-[28px] items-center justify-center rounded-[2px] bg-[#3a3a3a]">
          <Svg box="0 0 18 18" className="h-[18px] w-[18px]">
            <circle cx="9" cy="9" r="6" fill="#d4d4d4" />
            <circle cx="9" cy="9" r="8" stroke="#c0c0c0" strokeDasharray="2 1.6" />
          </Svg>
        </span>
      </MiniDock>
      <ColorPanel />
      <GradientPanel />
      <MiniDock className="top-[370px] left-[1375px] h-[54px]">
        <span className="mt-[2px] flex h-[23px] w-[28px] items-center justify-center rounded-[2px] bg-[#3a3a3a]">
          <span className="h-3 w-[17px] border border-[#c8c8c8] bg-linear-to-r from-[#444] to-[#aaa]" />
        </span>
      </MiniDock>
      <PathfinderPanel />
      <MiniDock className="top-[666px] left-[1688px] h-[83px]">
        <Svg box="0 0 18 13" className="mt-[7px] ml-px h-[13px] w-[18px]">
          <path d="M0 .5h18" stroke={G} />
          <path d="M0 5.5h18" stroke={G} strokeWidth="2" />
          <path d="M0 11.3h18" stroke={G} strokeWidth="3" />
        </Svg>
        <Svg box="0 0 18 18" className="mt-[12px] h-[18px] w-[18px]">
          <circle cx="7" cy="7" r="6.5" fill={G} />
          <circle cx="11.3" cy="11.3" r="6" fill="#8a8a8a" stroke={G} strokeWidth="1.3" />
        </Svg>
      </MiniDock>
    </div>
  )
}
